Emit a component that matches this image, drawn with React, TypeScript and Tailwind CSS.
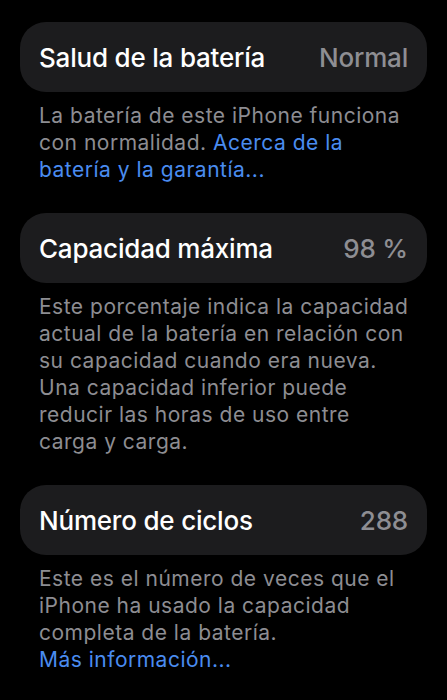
import React from "react";

type Section = {
  title: string;
  value: string;
  lines: React.ReactNode[];
};

const LINK = "text-[#4a8cf0]";

const SECTIONS: Section[] = [
  {
    title: "Salud de la batería",
    value: "Normal",
    lines: [
      "La batería de este iPhone funciona",
      <>
        con normalidad. <span className={LINK}>Acerca de la</span>
      </>,
      <span className={LINK}>batería y la garantía...</span>,
    ],
  },
  {
    title: "Capacidad máxima",
    value: "98 %",
    lines: [
      "Este porcentaje indica la capacidad",
      "actual de la batería en relación con",
      "su capacidad cuando era nueva.",
      "Una capacidad inferior puede",
      "reducir las horas de uso entre",
      "carga y carga.",
    ],
  },
  {
    title: "Número de ciclos",
    value: "288",
    lines: [
      "Este es el número de veces que el",
      "iPhone ha usado la capacidad",
      "completa de la batería.",
      <span className={LINK}>Más información...</span>,
    ],
  },
];

export default function App() {
  return (
    <div
      className="min-h-[700px] w-full bg-black px-5 pt-[22px] antialiased"
      style={{ fontFamily: "Inter, 'Noto Sans', sans-serif" }}
    >
      <div className="flex flex-col gap-[30px]">
        {SECTIONS.map((s) => (
          <div key={s.title}>
            <div className="flex h-[70px] items-center justify-between rounded-[26px] bg-[#1c1c1e] px-[19px]">
              <span className="text-[26px] font-medium tracking-[-0.2px] text-white">{s.title}</span>
              <span className="text-[26px] font-medium tracking-[-0.2px] text-[#8e8e93]">{s.value}</span>
            </div>
            <div className="mt-[10px] px-[19px] text-[21px] leading-[27px] tracking-[0.5px] whitespace-nowrap text-[#8d8d92]">
              {s.lines.map((l, i) => (
                <div key={i}>{l}</div>
              ))}
            </div>
          </div>
        ))}
      </div>
    </div>
  );
}
